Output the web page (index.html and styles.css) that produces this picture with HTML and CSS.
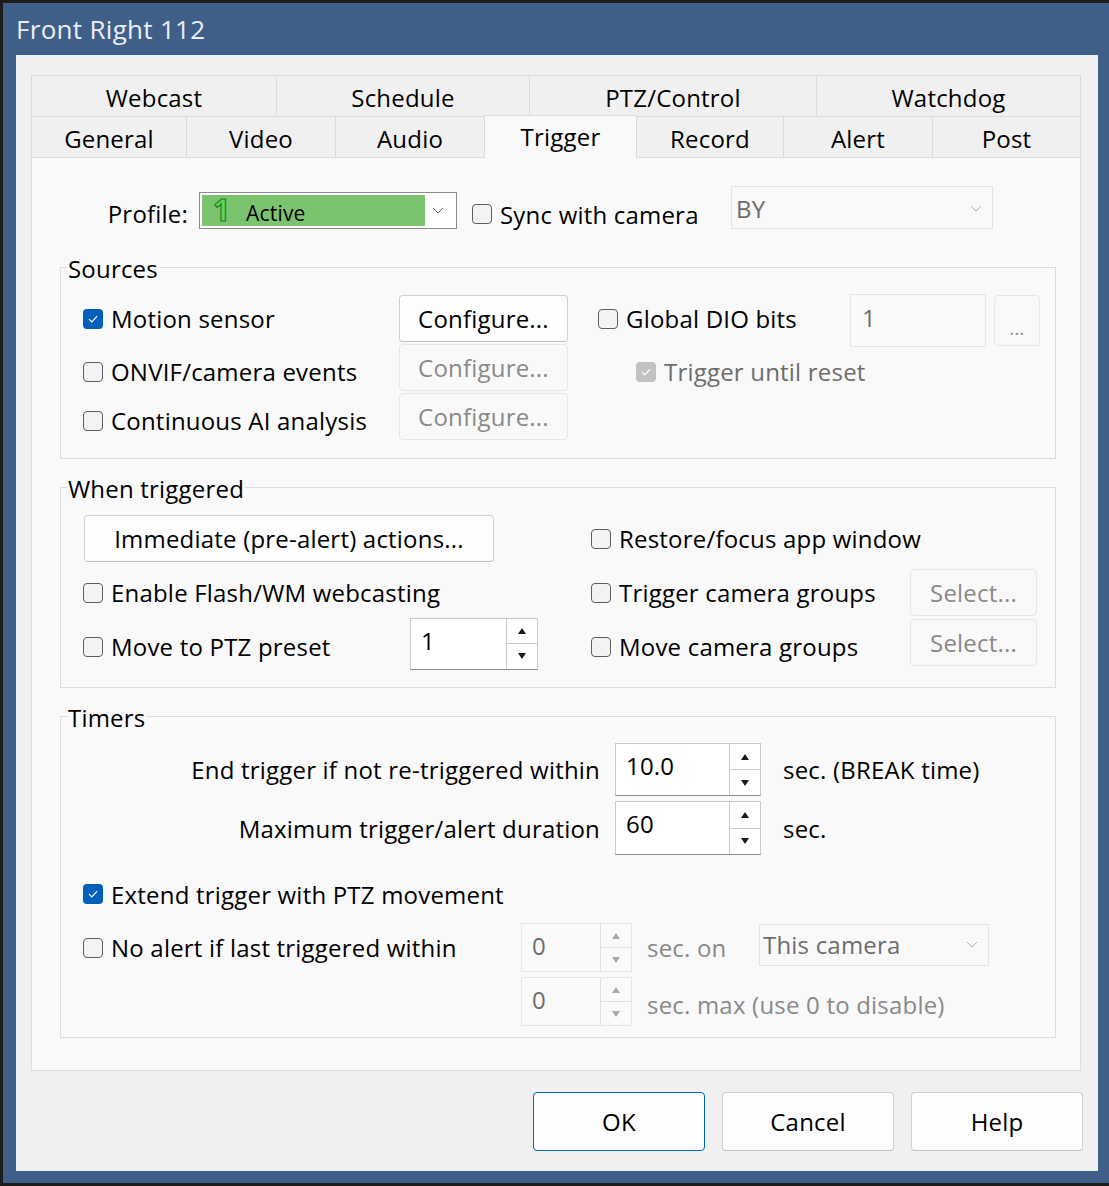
FILE: index.html
```html
<!DOCTYPE html>
<html lang="en">
<head>
  <meta charset="UTF-8" />
  <title>Front Right 112</title>
  <link rel="stylesheet" href="styles.css">
</head>
<body>
  <div class="window">
    <div class="titlebar">Front Right 112</div>

    <div class="client">
      <!-- tab strip, two rows -->
      <div class="tab-row row-back">
        <div class="tab first">Webcast</div>
        <div class="tab">Schedule</div>
        <div class="tab">PTZ/Control</div>
        <div class="tab">Watchdog</div>
      </div>
      <div class="tab-row row-front">
        <div class="tab first">General</div>
        <div class="tab">Video</div>
        <div class="tab">Audio</div>
        <div class="tab active">Trigger</div>
        <div class="tab">Record</div>
        <div class="tab">Alert</div>
        <div class="tab">Post</div>
      </div>

      <div class="panel">
        <!-- profile -->
        <div class="profile-row">
          <span class="profile-label">Profile:</span>
          <div class="combo profile-combo">
            <div class="combo-green"><span class="prof-num">1</span><span>Active</span></div>
            <svg class="chev" width="12" height="7" viewBox="0 0 12 7"><polyline points="1,1 6,6 11,1" fill="none" stroke="#606060" stroke-width="1"/></svg>
          </div>
          <label class="check sync"><span class="box"></span>Sync with camera</label>
          <div class="combo by-combo disabled">
            <span>BY</span>
            <svg class="chev" width="12" height="7" viewBox="0 0 12 7"><polyline points="1,1 6,6 11,1" fill="none" stroke="#b0b0b0" stroke-width="1"/></svg>
          </div>
        </div>

        <!-- sources -->
        <fieldset class="group group-sources">
          <legend>Sources</legend>
          <div class="sources-grid">
            <label class="check"><span class="box checked"><svg width="20" height="20" viewBox="0 0 20 20"><path d="M6 10.2 L8.8 13 L14.2 7.2" fill="none" stroke="#fff" stroke-width="1.2"/></svg></span>Motion sensor</label>
            <div class="btn">Configure...</div>
            <label class="check col-right"><span class="box"></span>Global DIO bits</label>
            <div class="textbox disabled">1</div>
            <div class="btn disabled dots">...</div>

            <label class="check low"><span class="box"></span>ONVIF/camera events</label>
            <div class="btn disabled">Configure...</div>
            <label class="check col-indent low disabled"><span class="box checked gray"><svg width="20" height="20" viewBox="0 0 20 20"><path d="M6 10.2 L8.8 13 L14.2 7.2" fill="none" stroke="#fff" stroke-width="1.2"/></svg></span>Trigger until reset</label>
            <div></div>
            <div></div>

            <label class="check low"><span class="box"></span>Continuous AI analysis</label>
            <div class="btn disabled">Configure...</div>
          </div>
        </fieldset>

        <!-- when triggered -->
        <fieldset class="group group-when">
          <legend>When triggered</legend>
          <div class="when-grid">
            <div class="btn btn-immediate">Immediate (pre-alert) actions...</div>
            <label class="check"><span class="box"></span>Restore/focus app window</label>
            <div></div>

            <label class="check"><span class="box"></span>Enable Flash/WM webcasting</label>
            <label class="check"><span class="box"></span>Trigger camera groups</label>
            <div class="btn disabled">Select...</div>

            <div class="ptz-cell">
              <label class="check ptz-label low"><span class="box"></span>Move to PTZ preset</label>
              <div class="spin spin-ptz">
                <span class="spin-value">1</span>
                <div class="spin-arrows"><span class="arrow up"></span><span class="arrow down"></span></div>
              </div>
            </div>
            <label class="check low"><span class="box"></span>Move camera groups</label>
            <div class="btn disabled">Select...</div>
          </div>
        </fieldset>

        <!-- timers -->
        <fieldset class="group group-timers">
          <legend>Timers</legend>
          <div class="timer-grid">
            <span class="timer-label">End trigger if not re-triggered within</span>
            <div class="spin spin-timer">
              <span class="spin-value">10.0</span>
              <div class="spin-arrows"><span class="arrow up"></span><span class="arrow down"></span></div>
            </div>
            <span class="unit">sec. (BREAK time)</span>

            <span class="timer-label">Maximum trigger/alert duration</span>
            <div class="spin spin-timer">
              <span class="spin-value">60</span>
              <div class="spin-arrows"><span class="arrow up"></span><span class="arrow down"></span></div>
            </div>
            <span class="unit">sec.</span>
          </div>

          <label class="check extend-row"><span class="box checked"><svg width="20" height="20" viewBox="0 0 20 20"><path d="M6 10.2 L8.8 13 L14.2 7.2" fill="none" stroke="#fff" stroke-width="1.2"/></svg></span>Extend trigger with PTZ movement</label>

          <div class="noalert-grid">
            <label class="check"><span class="box"></span>No alert if last triggered within</label>
            <div class="spin spin-small disabled">
              <span class="spin-value">0</span>
              <div class="spin-arrows"><span class="arrow up"></span><span class="arrow down"></span></div>
            </div>
            <div class="noalert-tail">
              <span class="unit gray">sec. on</span>
              <div class="combo camera-combo disabled">
                <span>This camera</span>
                <svg class="chev" width="12" height="7" viewBox="0 0 12 7"><polyline points="1,1 6,6 11,1" fill="none" stroke="#b0b0b0" stroke-width="1"/></svg>
              </div>
            </div>

            <div></div>
            <div class="spin spin-small disabled">
              <span class="spin-value">0</span>
              <div class="spin-arrows"><span class="arrow up"></span><span class="arrow down"></span></div>
            </div>
            <span class="unit gray max-unit">sec. max (use 0 to disable)</span>
          </div>
        </fieldset>
      </div>

      <!-- dialog buttons -->
      <div class="dialog-buttons">
        <div class="btn dlg-btn default">OK</div>
        <div class="btn dlg-btn">Cancel</div>
        <div class="btn dlg-btn">Help</div>
      </div>
    </div>
  </div>
</body>
</html>
```

FILE: styles.css
```css
body {
  margin: 0;
  background-color: #1d1d1d;
  font-family: "Open Sans", "Noto Sans", sans-serif;
  font-size: 24px;
  letter-spacing: 0.2px;
  color: #000;
}

/* window frame */
.window {
  margin: 3px 0 0 3px;
  width: 1106px;
  box-sizing: border-box;
  background-color: #3f5f88;
  padding: 0 11px 12px 13px;
}

.titlebar {
  height: 52px;
  display: flex;
  align-items: center;
  color: #e9eef5;
  font-size: 26px;
  letter-spacing: 0.3px;
}

.client {
  background-color: #f0f0f0;
  padding: 20px 17px 20px 15px;
}

/* tabs */
.tab-row {
  display: grid;
  height: 41px;
}

.row-back {
  grid-template-columns: 246px 253px 287px 264px;
}

.row-front {
  grid-template-columns: 156px 149px 149px 152px 147px 149px 148px;
}

.tab {
  box-sizing: border-box;
  height: 41px;
  padding-top: 2px;
  border-top: 1px solid #dcdcdc;
  border-right: 1px solid #dcdcdc;
  background-color: #f0f0f0;
  display: flex;
  align-items: center;
  justify-content: center;
}

.tab.first {
  border-left: 1px solid #dcdcdc;
}

.tab.active {
  position: relative;
  z-index: 1;
  margin-top: -1px;
  height: 43px;
  padding: 0 0 2px;
  background-color: #f9f9f9;
}

.panel {
  box-sizing: border-box;
  height: 914px;
  border: 1px solid #dcdcdc;
  background-color: #f9f9f9;
  padding: 28px 24px 0 28px;
}

/* profile row */
.profile-row {
  display: flex;
  align-items: flex-end;
  height: 43px;
}

.profile-label {
  width: 139px;
  box-sizing: border-box;
  padding-right: 11px;
  text-align: right;
  line-height: 30px;
}

.combo {
  box-sizing: border-box;
  display: flex;
  align-items: center;
  justify-content: space-between;
  border: 1px solid #8b8b8b;
  background-color: #fff;
}

.combo .chev {
  margin-right: 10px;
  flex-shrink: 0;
}

.profile-combo {
  width: 258px;
  height: 37px;
  padding: 2px;
}

.combo-green {
  width: 223px;
  height: 31px;
  box-sizing: border-box;
  padding-top: 5px;
  background-color: #7bc36e;
  display: flex;
  align-items: center;
  font-size: 21px;
}

.prof-num {
  width: 44px;
  padding-left: 11px;
  box-sizing: border-box;
  font-size: 30px;
  font-weight: 700;
  line-height: 28px;
  margin-top: -7px;
  color: #5cd65c;
  -webkit-text-stroke: 1.2px #237f23;
}

.combo.disabled {
  border-color: #e3e3e3;
  background-color: #f9f9f9;
  color: #6d6d6d;
}

.by-combo {
  width: 262px;
  height: 43px;
  padding-left: 4px;
  align-items: flex-start;
  padding-top: 5px;
}

.by-combo .chev {
  margin-top: 13px;
}

.sync {
  width: 274px;
  box-sizing: border-box;
  padding-left: 15px;
  height: 30px;
}

/* checkbox + label */
.check {
  display: flex;
  align-items: center;
  gap: 8px;
  white-space: nowrap;
}

.check.low {
  padding-top: 8px;
}

.box {
  width: 20px;
  height: 20px;
  box-sizing: border-box;
  flex-shrink: 0;
  border: 1px solid #5d5d5d;
  border-radius: 4px;
  background-color: #f3f3f3;
}

.box.checked {
  border: none;
  background-color: #005fb8;
}

.box.checked.gray {
  background-color: #c2c2c2;
}

.box svg {
  display: block;
}

.check.disabled {
  color: #6d6d6d;
}

/* group boxes */
.group {
  margin: 22px 0 0 0;
  padding: 0;
  border: 1px solid #dcdcdc;
  min-width: 0;
}

.group legend {
  margin-left: 6px;
  padding: 4px 1px 0;
  line-height: 28px;
}

.group-when,
.group-timers {
  margin-top: 12px;
}

/* buttons */
.btn {
  box-sizing: border-box;
  border: 1px solid #d0d0d0;
  border-bottom-color: #c0c0c0;
  border-radius: 4px;
  background-color: #fdfdfd;
  display: flex;
  align-items: center;
  justify-content: center;
  white-space: nowrap;
}

.btn.disabled {
  border-color: #e6e6e6;
  background-color: #f9f9f9;
  color: #8a8a8a;
}

/* sources */
.sources-grid {
  display: grid;
  grid-template-columns: 316px 169px 282px 136px 54px;
  grid-auto-rows: 47px;
  row-gap: 2px;
  padding: 12px 0 18px 22px;
}

.col-right {
  padding-left: 30px;
}

.col-indent {
  padding-left: 68px;
}

.textbox {
  box-sizing: border-box;
  height: 53px;
  margin-top: -1px;
  border: 1px solid #e6e6e6;
  background-color: #fafafa;
  padding: 6px 0 0 11px;
}

.textbox.disabled {
  color: #6d6d6d;
}

.dots {
  margin-left: 8px;
  height: 51px;
  padding-top: 14px;
  font-size: 18px;
}

/* when triggered */
.when-grid {
  display: grid;
  grid-template-columns: 508px 319px 127px;
  grid-template-rows: 54px 50px 47px;
  align-items: start;
  padding: 12px 0 21px 22px;
}

.when-grid > * {
  height: 47px;
  box-sizing: border-box;
}

.btn-immediate {
  width: 410px;
  margin-left: 1px;
}

.ptz-cell {
  display: flex;
  align-items: center;
}

.ptz-label {
  width: 327px;
  height: 47px;
  box-sizing: border-box;
  padding-top: 7px;
}

/* spin boxes */
.spin {
  box-sizing: border-box;
  display: flex;
  border: 1px solid #c9c9c9;
  border-bottom-color: #8d8d8d;
  background-color: #fff;
}

.spin-value {
  flex: 1;
  padding: 7px 0 0 10px;
  line-height: 30px;
}

.spin-arrows {
  width: 30px;
  display: flex;
  flex-direction: column;
  border-left: 1px solid #c9c9c9;
}

.arrow {
  flex: 1;
  display: flex;
  align-items: center;
  justify-content: center;
}

.arrow.up {
  border-bottom: 1px solid #c9c9c9;
}

.arrow::after {
  content: "";
  border-left: 4px solid transparent;
  border-right: 4px solid transparent;
}

.arrow.up::after {
  border-bottom: 6px solid #1a1a1a;
}

.arrow.down::after {
  border-top: 6px solid #1a1a1a;
}

.spin-ptz {
  width: 128px;
  height: 52px;
  flex-shrink: 0;
  margin-top: 2px;
}

.spin-timer {
  width: 146px;
}

.spin.disabled {
  border-color: #e6e6e6;
  background-color: #fafafa;
  color: #6d6d6d;
}

.spin.disabled .spin-arrows,
.spin.disabled .arrow.up {
  border-color: #e0e0e0;
}

.spin.disabled .arrow.up::after {
  border-bottom-color: #a8a8a8;
}

.spin.disabled .arrow.down::after {
  border-top-color: #a8a8a8;
}

/* timers */
.timer-grid {
  display: grid;
  grid-template-columns: 532px 146px auto;
  grid-template-rows: 53px 54px;
  row-gap: 5px;
  padding: 11px 0 0 22px;
  align-items: center;
}

.timer-grid .spin {
  height: 100%;
}

.timer-label {
  text-align: right;
  padding-right: 15px;
}

.unit {
  padding-left: 22px;
  white-space: nowrap;
}

.unit.gray {
  color: #8a8a8a;
  padding-left: 15px;
}

.extend-row {
  height: 40px;
  margin: 19px 0 0 22px;
}

.noalert-grid {
  display: grid;
  grid-template-columns: 438px 111px auto;
  grid-template-rows: 49px 49px;
  row-gap: 5px;
  padding: 9px 0 11px 22px;
  align-items: center;
}

.noalert-grid .spin {
  height: 100%;
}

.noalert-tail {
  display: flex;
  align-items: center;
}

.camera-combo {
  width: 230px;
  height: 42px;
  margin: -6px 0 0 0;
  padding-left: 3px;
}

.noalert-tail .unit {
  width: 127px;
  box-sizing: border-box;
}

.max-unit {
  padding-top: 6px;
}

/* bottom buttons */
.dialog-buttons {
  display: flex;
  justify-content: flex-end;
  gap: 17px;
  margin: 21px -2px 0 0;
}

.dlg-btn {
  width: 172px;
  height: 59px;
  background-color: #fdfdfd;
}

.dlg-btn.default {
  border-color: #0067c0;
}
```
